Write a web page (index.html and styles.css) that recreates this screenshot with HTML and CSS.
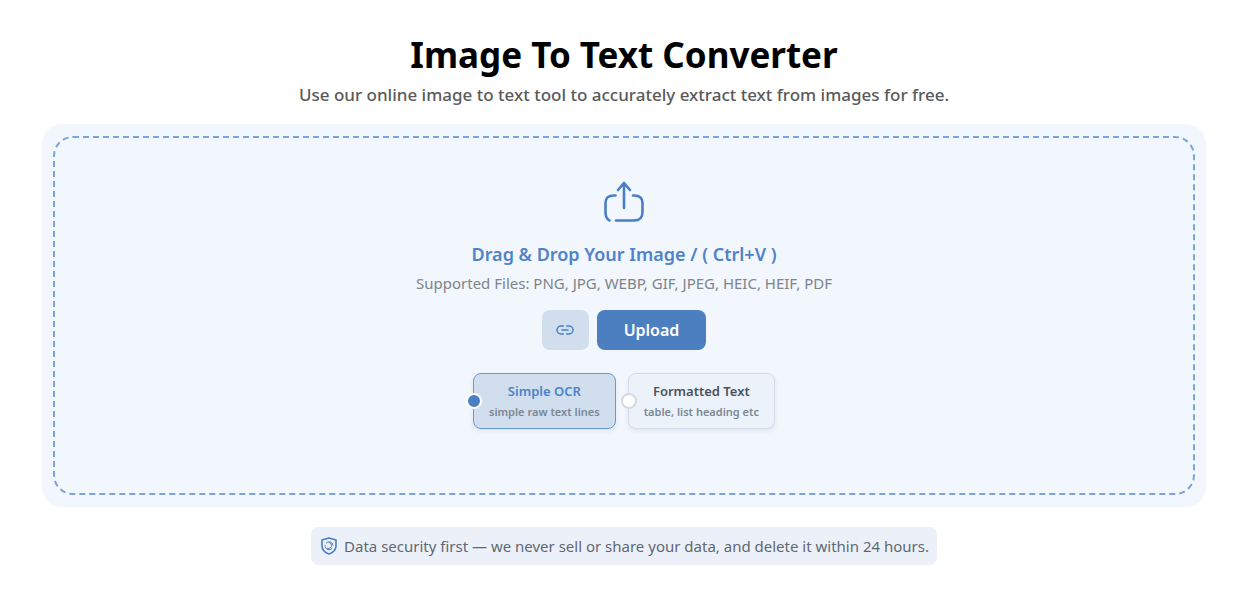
FILE: index.html
```html
<!DOCTYPE html>
<html lang="en">
<head>
<meta charset="utf-8">
<meta name="viewport" content="width=device-width, initial-scale=1">
<title>Image To Text Converter</title>
<link rel="stylesheet" href="styles.css">
</head>
<body>
<main class="page">
  <h1 class="title">Image To Text Converter</h1>
  <p class="subtitle">Use our online image to text tool to accurately extract text from images for free.</p>
  <section class="panel">
    <div class="dropzone">
      <svg class="share-icon" viewBox="0 0 42 42" fill="none" stroke="#4a7fc4" stroke-width="2.6" stroke-linecap="round" stroke-linejoin="round" aria-hidden="true">
        <path d="M21 27V2M15 9l6-7 6 7"/>
        <path d="M12.500 14.500H11C5 14.500 2.500 17 2.500 22v9c0 4 1 7 4 8.500"/>
        <path d="M30 14.500H31C37 14.500 39.500 17 39.500 22v9c0 6-2.500 8.500-8.500 8.500H13"/>
      </svg>
      <h2 class="drop-title">Drag &amp; Drop Your Image / ( Ctrl+V )</h2>
      <p class="formats">Supported Files: PNG, JPG, WEBP, GIF, JPEG, HEIC, HEIF, PDF</p>
      <div class="actions">
        <button class="link-button" type="button" aria-label="Add image link">
          <svg class="link-icon" viewBox="0 0 18 10" fill="none" stroke="#4a7fc4" stroke-width="1.500" stroke-linecap="round" aria-hidden="true">
            <path d="M7.300 1H5a4 4 0 0 0 0 8h2.300M10.700 1H13a4 4 0 0 1 0 8h-2.300M6 5h6"/>
          </svg>
        </button>
        <button class="upload-button" type="button">Upload</button>
      </div>
      <div class="modes">
        <label class="mode mode-selected">
          <input class="mode-radio" type="radio" name="mode" checked>
          <span class="mode-name">Simple OCR</span>
          <span class="mode-note">simple raw text lines</span>
        </label>
        <label class="mode">
          <input class="mode-radio" type="radio" name="mode">
          <span class="mode-name">Formatted Text</span>
          <span class="mode-note">table, list heading etc</span>
        </label>
      </div>
    </div>
  </section>
  <p class="security">
    <svg class="shield-icon" viewBox="0 0 16 18" fill="none" stroke="#4a7fc4" stroke-width="1.600" stroke-linejoin="round" aria-hidden="true">
      <path d="M8 1 15 3v6c0 4-3 6.500-7 8-4-1.500-7-4-7-8V3z"/>
      <path stroke-width="1" d="M5 6.200A4 4 0 0 1 12 8.500M11 11.400A4 4 0 0 1 4.100 9.500V8M8 5.500A3 3 0 1 1 6 11"/>
    </svg>
    <span>Data security first — we never sell or share your data, and delete it within 24 hours.</span>
  </p>
</main>
</body>
</html>
```
FILE: styles.css
```css
* { box-sizing: border-box; }
body {
  margin: 0;
  background: #fff;
  font-family: "Segoe UI", "Noto Sans", sans-serif;
}
.page {
  display: flex;
  flex-direction: column;
  align-items: center;
  padding: 30px 42px 26px;
}
.title, .subtitle, .drop-title, .formats, .security { margin: 0; text-align: center; }
.title { font-size: 35px; line-height: 50px; font-weight: 700; color: #000; }
.subtitle { margin-top: 3px; font-size: 17px; line-height: 24px; font-weight: 500; color: #5a5a5a; }
.panel {
  align-self: stretch;
  margin-top: 17px;
  padding: 12px 11px;
  border-radius: 20px;
  background: #f2f6fd;
}
.dropzone {
  display: flex;
  flex-direction: column;
  align-items: center;
  padding: 43px 16px 64px;
  border: 2px dashed #7ba4d8;
  border-radius: 20px;
}
.share-icon { width: 42px; height: 42px; }
.drop-title { margin-top: 18px; font-size: 18px; line-height: 26px; font-weight: 600; color: #4f82c7; }
.formats { margin-top: 5px; font-size: 15px; line-height: 22px; color: #808489; }
.actions { display: flex; gap: 8px; margin-top: 16px; }
.link-button, .upload-button {
  display: flex;
  align-items: center;
  justify-content: center;
  height: 40px;
  border: 0;
  border-radius: 8px;
  font-family: inherit;
}
.link-button { width: 47px; padding: 0; background: #d0deed; }
.link-icon { width: 18px; height: 10px; }
.upload-button { padding: 0 27px; background: #4c7fbf; color: #fff; font-size: 16px; font-weight: 600; }
.modes { display: flex; gap: 12px; margin-top: 23px; }
.mode {
  position: relative;
  display: flex;
  flex-direction: column;
  align-items: center;
  padding: 7px 15px;
  border: 1px solid #d5dce7;
  border-radius: 8px;
  background: #ebf2f9;
  box-shadow: 0 2px 4px rgba(60, 90, 130, 0.1);
}
.mode-selected { border-color: #6a98d2; background: #d0deed; }
.mode-radio {
  position: absolute;
  top: 50%;
  left: -8px;
  width: 16px;
  height: 16px;
  margin: 0;
  transform: translateY(-50%);
  appearance: none;
  border: 2px solid #d5dae2;
  border-radius: 50%;
  background: #fff;
}
.mode-radio:checked { border-color: #fff; background: #4a7fc4; }
.mode-name { font-size: 13px; line-height: 21px; font-weight: 600; color: #4b525c; }
.mode-selected .mode-name { color: #4f82c7; }
.mode-note { font-size: 11px; line-height: 19px; font-weight: 600; color: #7a8795; }
.security {
  display: flex;
  align-items: center;
  gap: 7px;
  margin-top: 20px;
  padding: 8px 8px 8px 10px;
  border-radius: 8px;
  background: #ecf1f9;
  color: #606873;
  font-size: 15px;
  line-height: 22px;
}
.shield-icon { flex: none; width: 16px; height: 18px; }
```
